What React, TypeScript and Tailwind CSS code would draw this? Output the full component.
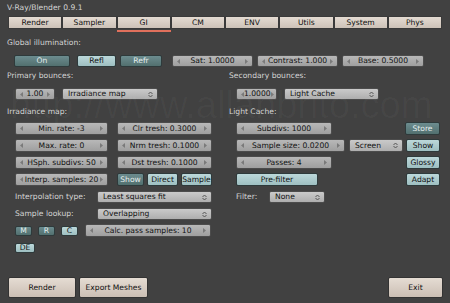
import React from 'react';

type W = { w: string };

function Arrow({ dir }: { dir: 'l' | 'r' }) {
  return (
    <svg width="3" height="5" viewBox="0 0 3 5" className="shrink-0">
      <path d={dir === 'l' ? 'M3 0 L0 2.5 L3 5 Z' : 'M0 0 L3 2.5 L0 5 Z'} fill="#7a7a7a" />
    </svg>
  );
}

function Num({ label, w }: { label: string } & W) {
  return (
    <div
      className={`${w} h-full flex items-center justify-between px-[4px] rounded-[2px] border border-[#4c4c4c] bg-linear-to-b from-[#b8b8b8] to-[#9f9f9f] text-[#111]`}
    >
      <Arrow dir="l" />
      <span className="whitespace-nowrap">{label}</span>
      <Arrow dir="r" />
    </div>
  );
}

function Menu({ label, w }: { label: string } & W) {
  return (
    <div
      className={`${w} h-full flex items-center justify-between pl-[5px] pr-[4px] rounded-[2px] border border-[#4c4c4c] bg-linear-to-b from-[#cacaca] to-[#aeaeae] text-[#111]`}
    >
      <span className="whitespace-nowrap">{label}</span>
      <svg width="5" height="7" viewBox="0 0 5 7" className="shrink-0">
        <path d="M0.5 3 L2.5 1 L4.5 3 M0.5 4 L2.5 6 L4.5 4" stroke="#555" fill="none" strokeWidth="1" />
      </svg>
    </div>
  );
}

function Tog({ label, w, on }: { label: string; on?: boolean } & W) {
  return (
    <div
      className={`${w} h-full flex items-center justify-center rounded-[2px] border border-[#2e3a3b] whitespace-nowrap ${
        on
          ? 'bg-linear-to-b from-[#bcd8da] to-[#9ebfc1] text-[#111]'
          : 'bg-linear-to-b from-[#6c8c8f] to-[#52706f] text-[#e4eded]'
      }`}
    >
      {label}
    </div>
  );
}

function Btn({ label, w }: { label: string } & W) {
  return (
    <div
      className={`${w} h-full flex items-center justify-center rounded-[2px] border border-[#333] bg-linear-to-b from-[#e5dcd3] to-[#cbbfb4] text-[#111] whitespace-nowrap`}
    >
      {label}
    </div>
  );
}

const tabs = ['Render', 'Sampler', 'GI', 'CM', 'ENV', 'Utils', 'System', 'Phys'];

export default function App() {
  return (
    <div className="relative w-[450px] h-[303px] overflow-hidden bg-[#414141] flex flex-col text-[7.6px] leading-none font-['DejaVu_Sans',sans-serif]">
      {/* watermark */}
      <div className="absolute left-[10px] top-[86px] text-[38px] leading-none text-white/[0.03] font-['Liberation_Sans',sans-serif] pointer-events-none whitespace-nowrap">
        http://www.allanbrito.com
      </div>

      <div className="pl-[7px] pt-[3px] h-[13px] flex items-center text-[#d4d4d4]">V-Ray/Blender 0.9.1</div>

      {/* tabs */}
      <div className="mx-[8px] mt-[3px] flex">
        {tabs.map((t) => (
          <div key={t} className="flex-1 flex flex-col">
            <div className="h-[13px] flex items-center justify-center border border-[#3a3a3a] bg-linear-to-b from-[#e4dbd2] to-[#cdc2b8] text-[#111]">
              {t}
            </div>
            <div className={`mt-[1px] h-[2px] ${t === 'GI' ? 'bg-[#e0705c]' : ''}`} />
          </div>
        ))}
      </div>

      <div className="pl-[7px] mt-[6px] h-[10px] flex items-center text-[#d4d4d4]">Global illumination:</div>

      <div className="pl-[14px] mt-[7px] h-[12px] flex">
        <Tog label="On" w="w-[56px]" />
        <div className="ml-[7px]"><Tog label="Refl" w="w-[39px]" on /></div>
        <div className="ml-[4px]"><Tog label="Refr" w="w-[42px]" /></div>
        <div className="ml-[10px] flex gap-[4px] h-full">
          <Num label="Sat: 1.0000" w="w-[81px]" />
          <Num label="Contrast: 1.000" w="w-[81px]" />
          <Num label="Base: 0.5000" w="w-[82px]" />
        </div>
      </div>

      <div className="mt-[4px] flex text-[#d4d4d4]">
        {/* left column */}
        <div className="w-[229px] pl-[7px] flex flex-col">
          <div className="h-[10px] flex items-center">Primary bounces:</div>
          <div className="mt-[7px] h-[12px] pl-[8px] flex gap-[7px]">
            <Num label="1.00" w="w-[40px]" />
            <Menu label="Irradiance map" w="w-[96px]" />
          </div>
          <div className="mt-[7px] h-[10px] flex items-center">Irradiance map:</div>
          <div className="mt-[5px] h-[13px] pl-[8px] flex gap-[9px]">
            <Num label="Min. rate: -3" w="w-[93px]" />
            <Num label="Clr tresh: 0.3000" w="w-[95px]" />
          </div>
          <div className="mt-[4px] h-[13px] pl-[8px] flex gap-[9px]">
            <Num label="Max. rate: 0" w="w-[93px]" />
            <Num label="Nrm tresh: 0.1000" w="w-[95px]" />
          </div>
          <div className="mt-[4px] h-[13px] pl-[8px] flex gap-[9px]">
            <Num label="HSph. subdivs: 50" w="w-[93px]" />
            <Num label="Dst tresh: 0.1000" w="w-[95px]" />
          </div>
          <div className="mt-[4px] h-[13px] pl-[8px] flex">
            <Num label="Interp. samples: 20" w="w-[93px]" />
            <div className="ml-[9px] flex gap-[3px] h-full">
              <Tog label="Show" w="w-[27px]" />
              <Tog label="Direct" w="w-[31px]" on />
              <Tog label="Sample" w="w-[31px]" on />
            </div>
          </div>
          <div className="mt-[5px] h-[12px] pl-[8px] flex items-center">
            <span className="w-[82px]">Interpolation type:</span>
            <Menu label="Least squares fit" w="w-[115px]" />
          </div>
          <div className="mt-[5px] h-[12px] pl-[8px] flex items-center">
            <span className="w-[82px]">Sample lookup:</span>
            <Menu label="Overlapping" w="w-[115px]" />
          </div>
          <div className="mt-[4px] h-[13px] pl-[8px] flex items-center">
            <div className="h-[10px] flex gap-[6px]">
              <Tog label="M" w="w-[17px]" />
              <Tog label="R" w="w-[17px]" />
              <Tog label="C" w="w-[17px]" on />
            </div>
            <div className="ml-[7px] h-full">
              <Num label="Calc. pass samples: 10" w="w-[126px]" />
            </div>
          </div>
          <div className="mt-[6px] h-[10px] pl-[8px] flex">
            <Tog label="DE" w="w-[20px]" on />
          </div>
        </div>

        {/* right column */}
        <div className="w-[214px] flex flex-col">
          <div className="h-[10px] flex items-center">Secondary bounces:</div>
          <div className="mt-[7px] h-[12px] pl-[7px] flex gap-[7px]">
            <Num label="1.0000" w="w-[41px]" />
            <Menu label="Light Cache" w="w-[95px]" />
          </div>
          <div className="mt-[7px] h-[10px] flex items-center">Light Cache:</div>
          <div className="mt-[5px] h-[13px] pl-[7px] pr-[3px] flex">
            <Num label="Subdivs: 1000" w="w-[96px]" />
            <div className="ml-auto h-full"><Tog label="Store" w="w-[35px]" /></div>
          </div>
          <div className="mt-[4px] h-[13px] pl-[7px] pr-[3px] flex">
            <Num label="Sample size: 0.0200" w="w-[109px]" />
            <div className="ml-[4px] h-full"><Menu label="Screen" w="w-[54px]" /></div>
            <div className="ml-auto h-full"><Tog label="Show" w="w-[34px]" on /></div>
          </div>
          <div className="mt-[4px] h-[13px] pl-[7px] pr-[3px] flex">
            <Num label="Passes: 4" w="w-[96px]" />
            <div className="ml-auto h-full"><Tog label="Glossy" w="w-[34px]" on /></div>
          </div>
          <div className="mt-[4px] h-[13px] pl-[7px] pr-[3px] flex">
            <Tog label="Pre-filter" w="w-[82px]" on />
            <div className="ml-auto h-full"><Tog label="Adapt" w="w-[34px]" on /></div>
          </div>
          <div className="mt-[5px] h-[12px] pl-[7px] flex items-center">
            <span className="w-[33px]">Filter:</span>
            <Menu label="None" w="w-[56px]" />
          </div>
        </div>
      </div>

      {/* bottom buttons */}
      <div className="mt-auto mb-[5px] mx-[8px] h-[21px] flex">
        <Btn label="Render" w="w-[68px]" />
        <div className="ml-[3px] h-full"><Btn label="Export Meshes" w="w-[69px]" /></div>
        <div className="ml-auto mr-[-1px] h-full"><Btn label="Exit" w="w-[55px]" /></div>
      </div>
    </div>
  );
}
